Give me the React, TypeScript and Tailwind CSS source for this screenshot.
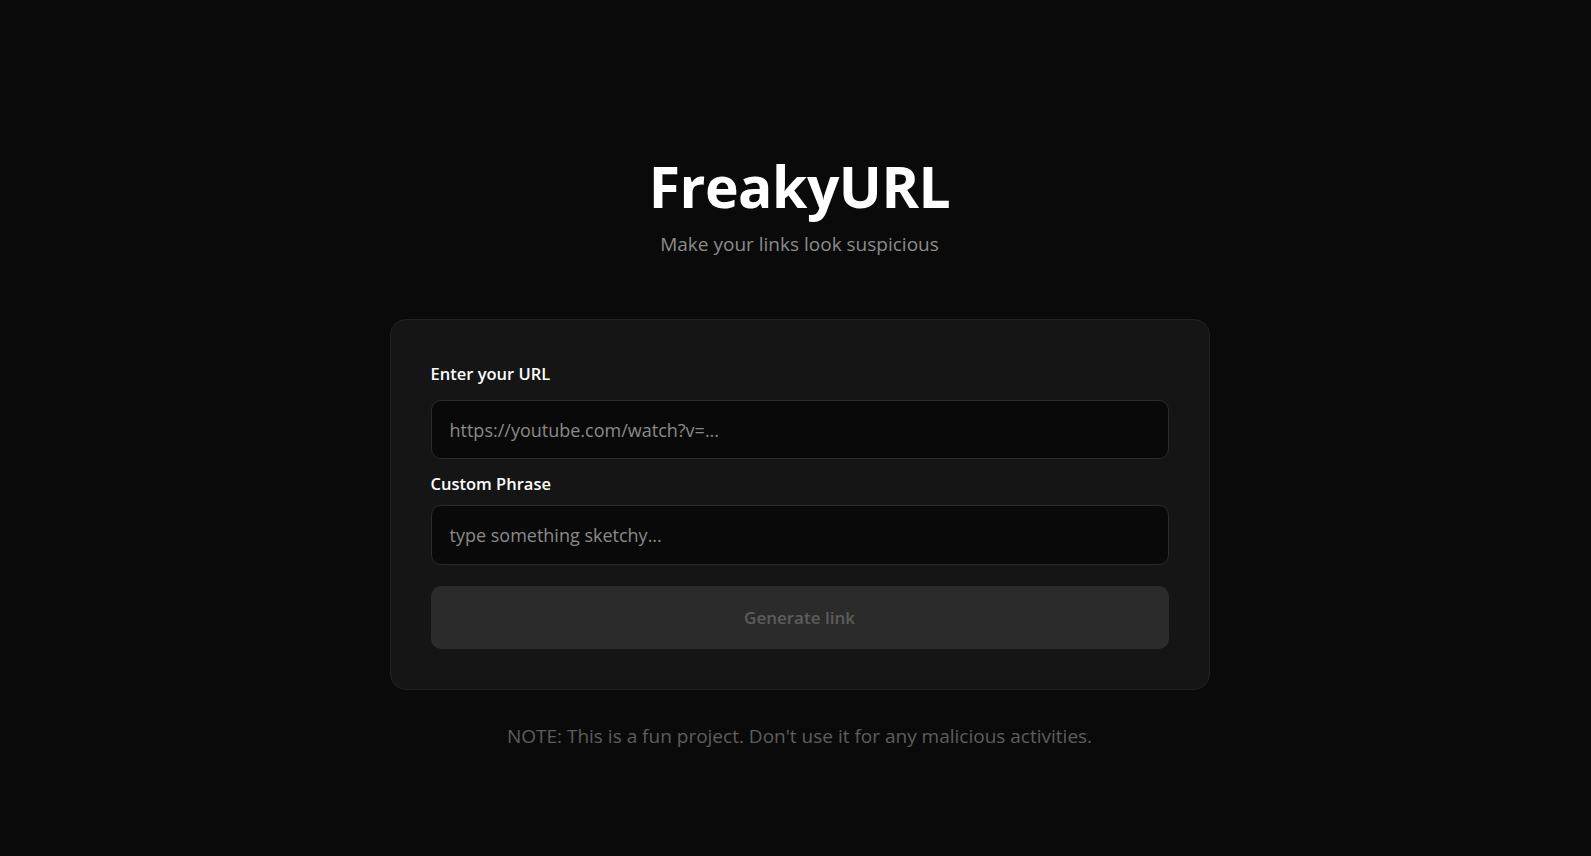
import { useState } from 'react'

const font = { fontFamily: '"Open Sans", "Noto Sans", sans-serif' }

export default function App() {
  const [url, setUrl] = useState('')
  const [phrase, setPhrase] = useState('')
  const ready = url.trim() !== '' && phrase.trim() !== ''

  return (
    <main
      className="flex min-h-screen flex-col items-center bg-[#0a0a0a] pl-2 text-white"
      style={font}
    >
      <h1 className="pt-[158px] text-[57px] leading-none font-bold tracking-[-0.5px]">FreakyURL</h1>
      <p className="mt-[15px] text-[19px] leading-7 text-[#8c8c8c]">Make your links look suspicious</p>

      <form
        className="mt-[61px] flex w-[820px] flex-col rounded-2xl border border-[#222] bg-[#151515] p-10"
        onSubmit={(e) => e.preventDefault()}
      >
        <label htmlFor="url" className="mt-[2px] mb-[14px] text-[16.5px] leading-6 font-semibold">
          Enter your URL
        </label>
        <input
          id="url"
          value={url}
          onChange={(e) => setUrl(e.target.value)}
          placeholder="https://youtube.com/watch?v=..."
          className="h-[59px] rounded-[10px] border border-[#2a2a2a] bg-[#090909] px-[18px] text-[18px] text-white outline-none placeholder:text-[#8a8a8a]"
        />

        <label htmlFor="phrase" className="mt-[13px] mb-[9px] text-[16.5px] leading-6 font-semibold">
          Custom Phrase
        </label>
        <input
          id="phrase"
          value={phrase}
          onChange={(e) => setPhrase(e.target.value)}
          placeholder="type something sketchy..."
          className="h-[60px] rounded-[10px] border border-[#2a2a2a] bg-[#090909] px-[18px] text-[18px] text-white outline-none placeholder:text-[#8a8a8a]"
        />

        <button
          type="submit"
          disabled={!ready}
          className="mt-[21px] h-[63px] rounded-[10px] bg-[#2b2b2b] text-[17px] font-semibold text-[#5c5c5c]"
        >
          Generate link
        </button>
      </form>

      <p className="mt-[32px] text-[19px] leading-7 text-[#5e5e5e]">
        NOTE: This is a fun project. Don't use it for any malicious activities.
      </p>
    </main>
  )
}
